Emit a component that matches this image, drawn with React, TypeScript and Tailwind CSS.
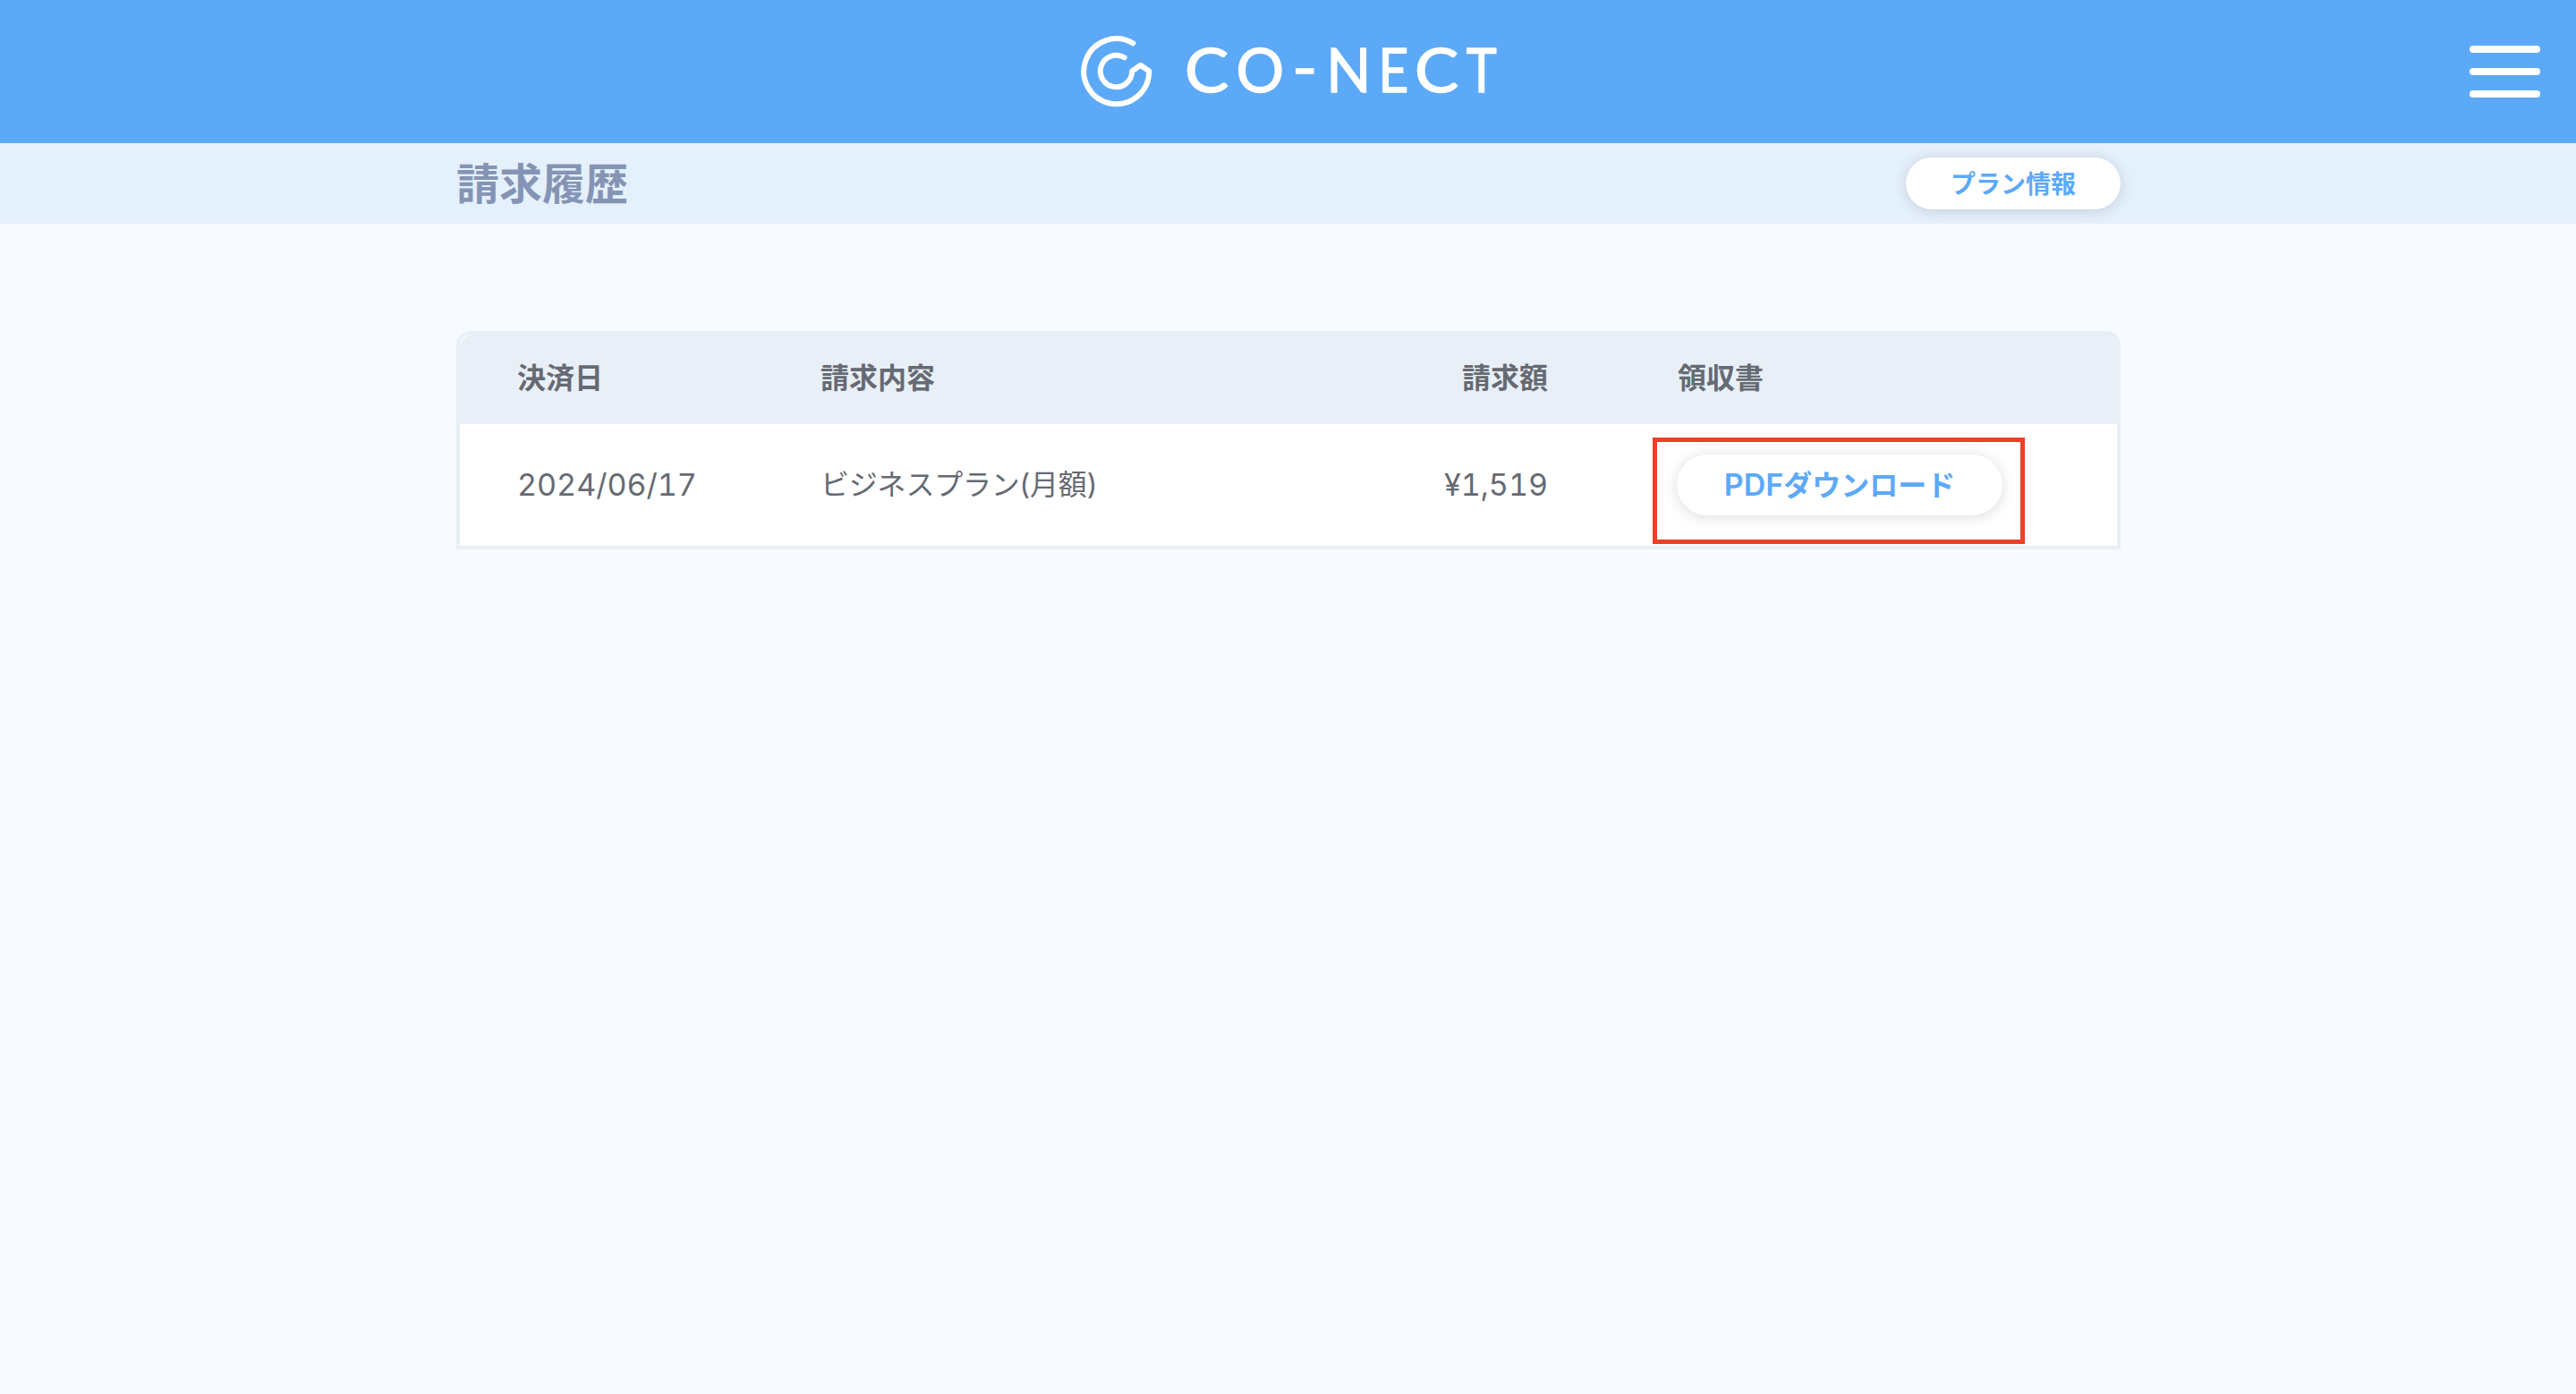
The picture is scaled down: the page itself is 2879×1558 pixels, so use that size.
const rows = [{ date: '2024/06/17', item: 'ビジネスプラン(月額)', amount: '¥1,519' }];

const letters = [
  { char: 'C', x: 1323.9, y: 103.3, stretch: 1.1 },
  { char: 'O', x: 1381.6, y: 103.3, stretch: 1 },
  { char: '-', x: 1444, y: 99.8, stretch: 1.14 },
  { char: 'N', x: 1482.3, y: 103.3, stretch: 0.98 },
  { char: 'E', x: 1540.4, y: 103.3, stretch: 0.87 },
  { char: 'C', x: 1580.9, y: 103.3, stretch: 1.1 },
  { char: 'T', x: 1638.8, y: 103.3, stretch: 0.86 },
];

function Logo() {
  return (
    <svg width="480" height="100" viewBox="1200 30 480 100" className="block" role="img" aria-label="CO-NECT">
      <path
        d="M1266.3 48.3A36.5 36.5 0 1 0 1284.3 79.5L1274.7 72.8L1265.2 79.5A17.7 17.7 0 1 1 1256.6 64.3"
        fill="none"
        stroke="#fff"
        strokeWidth="6"
        strokeLinecap="round"
        strokeLinejoin="round"
      />
      <g fill="#fff" stroke="#fff" strokeWidth="1.4" className="font-['Lato',sans-serif] text-[67px]">
        {letters.map((l) => (
          <text key={l.x} transform={`translate(${l.x} ${l.y}) scale(${l.stretch} 1)`}>
            {l.char}
          </text>
        ))}
      </g>
    </svg>
  );
}

const columns = 'grid grid-cols-[339px_541px_272px_1fr] items-center pl-16';

export default function App() {
  return (
    <div className="min-h-[1558px] bg-[#f7faff] font-['Inter','Noto_Sans_CJK_JP',sans-serif] text-[#666a73]">
      <header className="grid h-40 grid-cols-[1200px_480px_1fr] items-center bg-[#5ca9f8]">
        <span />
        <Logo />
        <button className="mr-10 flex w-[79px] flex-col gap-[17px] justify-self-end" aria-label="メニュー">
          <span className="h-2 w-full rounded-full bg-white" />
          <span className="h-2 w-full rounded-full bg-white" />
          <span className="h-2 w-full rounded-full bg-white" />
        </button>
      </header>
      <div className="h-[90px] bg-[#e4f0fc] pl-[510px]">
        <div className="flex h-full w-[1860px] items-center justify-between">
          <h1 className="pt-px text-[48px] leading-none font-bold text-[#8594b5]">請求履歴</h1>
          <button className="h-[58px] w-[240px] rounded-full bg-white pt-0.5 text-[28px] leading-none font-bold text-[#5ca9f8] shadow-[0_2px_16px_rgba(0,0,0,0.14)]">
            プラン情報
          </button>
        </div>
      </div>
      <main className="pt-[120px] pl-[510px]">
        <section className="w-[1860px] overflow-hidden rounded-t-[16px] border-4 border-[#e8f0f5] bg-white text-[32px] leading-none">
          <div className={`${columns} h-[100px] rounded-tl-[15px] bg-[#e8eff7] pb-0.5 font-bold`}>
            <span>決済日</span>
            <span>請求内容</span>
            <span className="text-right">請求額</span>
            <span className="pl-[145px]">領収書</span>
          </div>
          {rows.map((row) => (
            <div key={row.date} className={`${columns} h-[136px]`}>
              <span className="text-[34px] tabular-nums">{row.date}</span>
              <span className="tracking-[-0.2px]">{row.item}</span>
              <span className="text-right text-[34px] tabular-nums">{row.amount}</span>
              <div className="relative pl-36">
                <button className="block h-[68px] w-[364px] rounded-full bg-white font-bold text-[#5ca9f8] shadow-[0_2px_16px_rgba(0,0,0,0.14)]">
                  <span className="text-[34px] font-semibold">PDF</span>ダウンロード
                </button>
                <div className="pointer-events-none absolute -top-[19px] left-[117px] h-[119px] w-[416px] border-5 border-[#ea4127]" />
              </div>
            </div>
          ))}
        </section>
      </main>
    </div>
  );
}
